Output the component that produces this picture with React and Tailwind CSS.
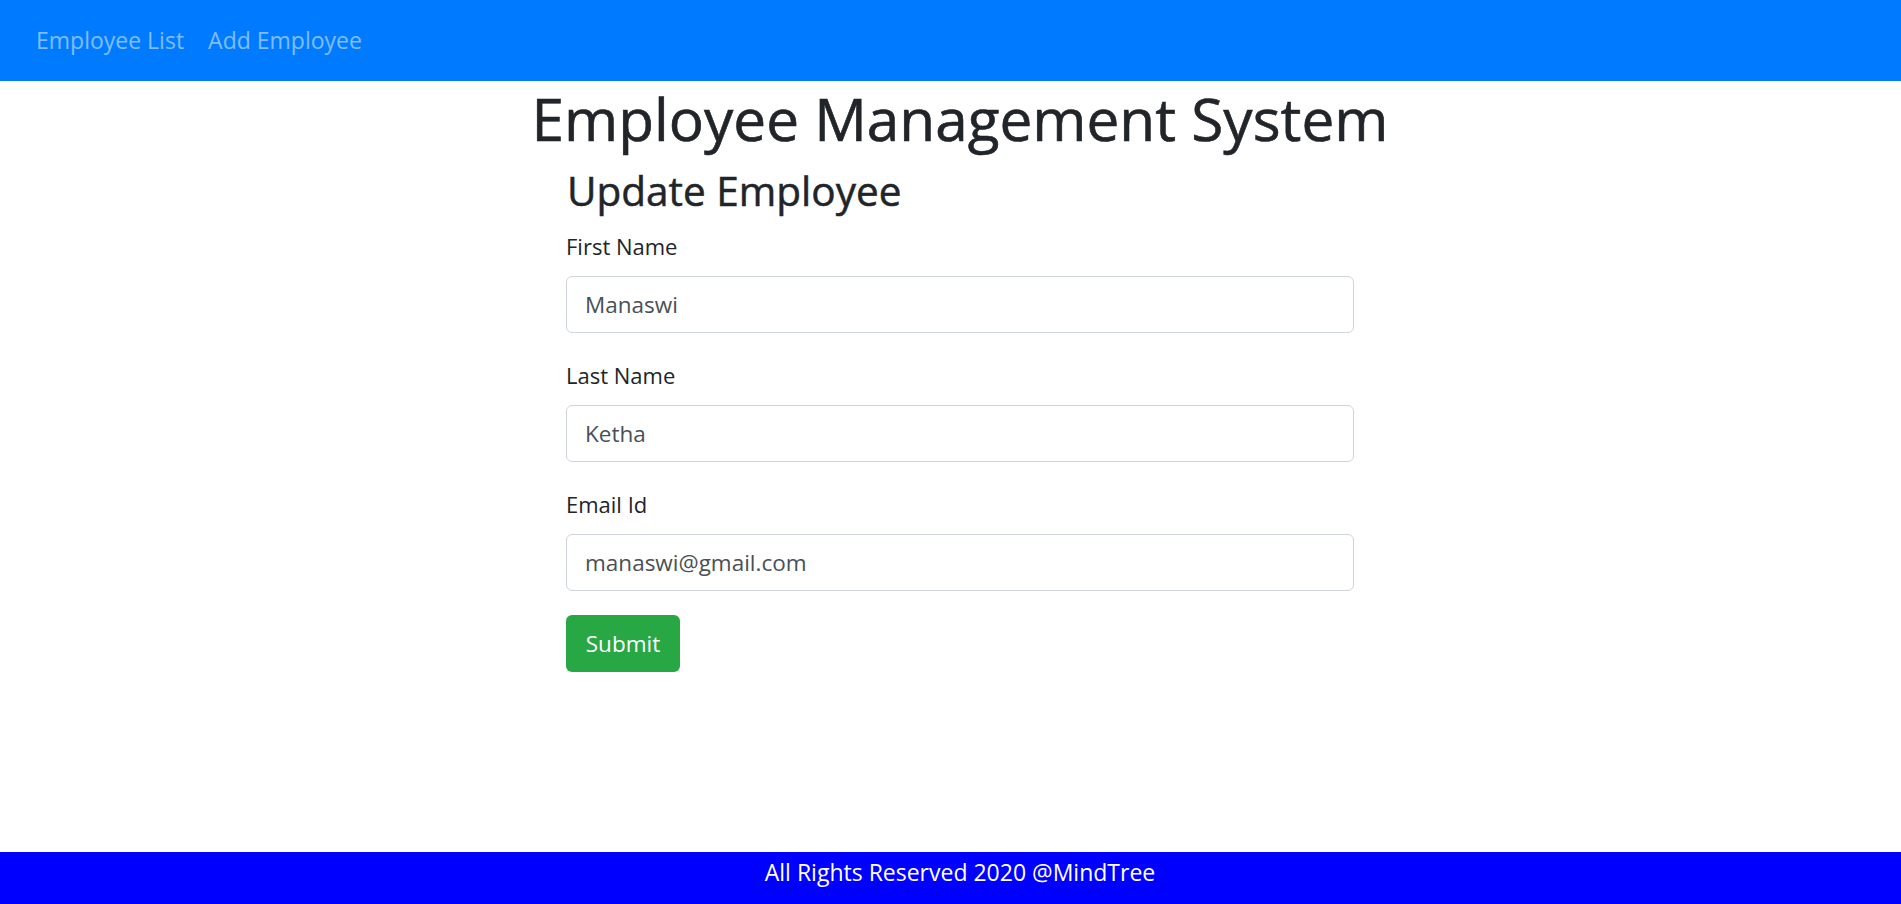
export default function App() {
  const fields = [
    { label: 'First Name', value: 'Manaswi' },
    { label: 'Last Name', value: 'Ketha' },
    { label: 'Email Id', value: 'manaswi@gmail.com' },
  ];

  return (
    <div className="min-h-[904px] flex flex-col bg-white text-[#212529] font-['Open_Sans',sans-serif]">
      <nav className="h-[81px] bg-[#007bff] flex items-center px-[24px] shrink-0">
        <a className="px-[12px] text-[23px] text-white/50">Employee List</a>
        <a className="px-[12px] text-[23px] text-white/50">Add Employee</a>
      </nav>

      <main className="flex-1 pl-[19px] pt-[1px]">
        <h1 className="text-center text-[58.5px] leading-[72px] font-normal [-webkit-text-stroke:0.6px_#212529] mb-[12px]">Employee Management System</h1>
        <div className="w-[788px] mx-auto">
          <h3 className="text-[40.5px] leading-[50px] font-normal [-webkit-text-stroke:0.5px_#212529] mb-[12px] pl-[1px]">Update Employee</h3>
          <form onSubmit={(e) => e.preventDefault()}>
            {fields.map((f) => (
              <div key={f.label} className="mb-[24px]">
                <label className="block text-[22px] leading-[36px] mb-[12px]">{f.label}</label>
                <input
                  defaultValue={f.value}
                  className="block w-full h-[57px] px-[18px] text-[22.5px] text-[#495057] border border-[#ced4da] rounded-[6px] outline-none"
                />
              </div>
            ))}
            <button className="h-[57px] w-[114px] bg-[#28a745] text-white text-[22.5px] rounded-[6px]">Submit</button>
          </form>
        </div>
      </main>

      <footer className="h-[52px] bg-[#0000ff] text-white text-center text-[23px] leading-[41px] pl-[19px] shrink-0">
        All Rights Reserved 2020 @MindTree
      </footer>
    </div>
  );
}
